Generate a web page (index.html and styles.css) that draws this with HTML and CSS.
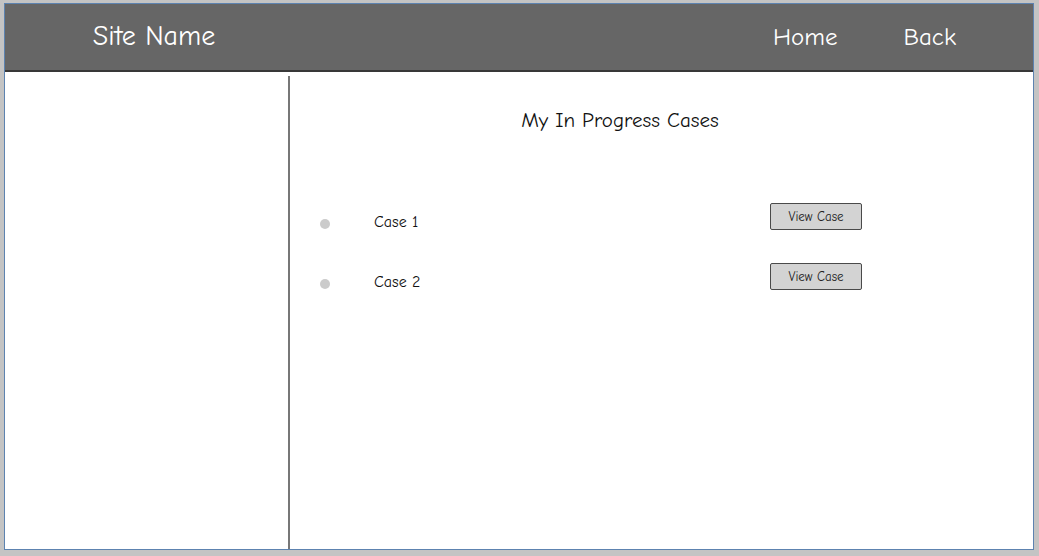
FILE: index.html
```html
<!DOCTYPE html>
<html>
<head>
  <title>My In Progress Cases</title>
  <link rel="stylesheet" href="styles.css">
</head>
<body>

<div class="window">
  <nav class="navbar">
    <div class="site-name">Site Name</div>
    <div class="nav-links">
      <a class="nav-link" href="#">Home</a>
      <a class="nav-link" href="#">Back</a>
    </div>
  </nav>

  <div class="container">
    <div class="left-panel"></div>

    <div class="right-panel">
      <h1 class="page-title">My In Progress Cases</h1>

      <ul class="case-list">
        <li class="case-row">
          <span class="dot"></span>
          <span class="case-name">Case 1</span>
          <button class="view-btn">View Case</button>
        </li>
        <li class="case-row">
          <span class="dot"></span>
          <span class="case-name">Case 2</span>
          <button class="view-btn">View Case</button>
        </li>
      </ul>
    </div>
  </div>
</div>

</body>
</html>
```

FILE: styles.css
```css
body {
  margin: 0px;
  background-color: #c4c4c4;
  font-family: "Comic Sans MS", "Comic Neue", "DejaVu Sans", sans-serif;
}
.window {
  margin: 3px 5px 0 4px;
  height: 545px;
  border: 1px solid #5d83b0;
  background-color: #fff;
  display: flex;
  flex-direction: column;
}
.navbar {
  height: 66px;
  background-color: #666;
  border-bottom: 2px solid #383838;
  display: flex;
  align-items: center;
  color: #fff;
}
.site-name {
  width: 298px;
  text-align: center;
  font-size: 28px;
  padding-bottom: 2px;
}
.nav-links {
  margin-left: auto;
  display: flex;
  padding-right: 77px;
}
.nav-link {
  color: #fff;
  text-decoration: none;
  font-size: 25px;
  margin-left: 66px;
  padding-bottom: 2px;
}
.container {
  flex: 1;
  display: flex;
  padding-top: 4px;
}
.left-panel {
  width: 283px;
  border-right: 2px solid #777;
}
.right-panel {
  width: 660px;
}
.page-title {
  margin: 32px 0 0 0;
  text-align: center;
  font-weight: normal;
  font-size: 21px;
  color: #111;
}
.case-list {
  list-style: none;
  margin: 60px 0 0 0;
  padding: 0;
}
.case-row {
  display: flex;
  align-items: center;
  height: 60px;
}
.dot {
  width: 10px;
  height: 10px;
  border-radius: 50%;
  background-color: #cbcbcb;
  margin-left: 30px;
  margin-top: 3px;
}
.case-name {
  margin-left: 44px;
  font-size: 16px;
  color: #111;
}
.view-btn {
  margin-left: auto;
  margin-right: 88px;
  width: 92px;
  height: 27px;
  margin-top: -12px;
  background-color: #d3d3d3;
  border: 1px solid #4a4a4a;
  border-radius: 2px;
  font-family: inherit;
  font-size: 13px;
  color: #222;
  padding: 0;
}
```
